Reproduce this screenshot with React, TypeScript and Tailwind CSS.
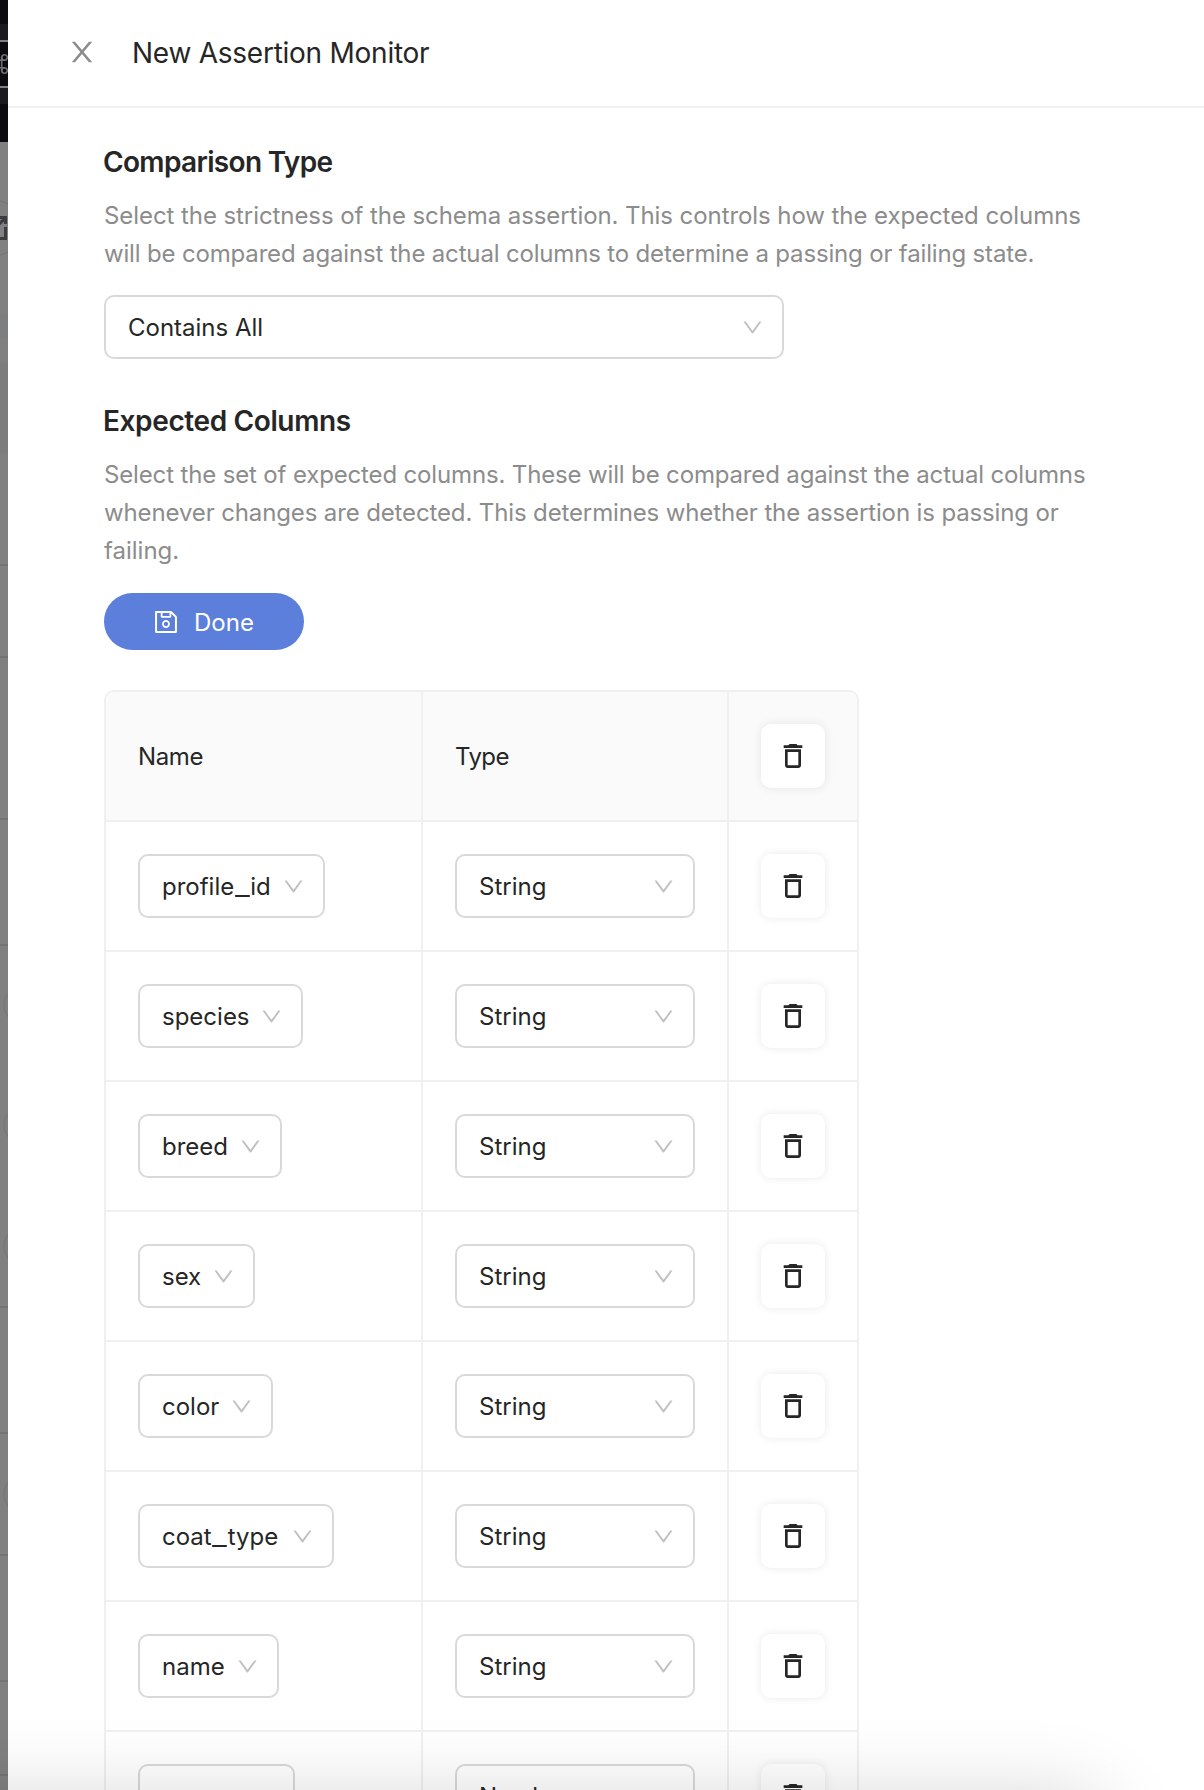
import { Fragment, type ReactNode } from "react";
import { AiOutlineSave } from "react-icons/ai";
import { MdDeleteOutline } from "react-icons/md";

type Column = { name: string; type: string; width: string };

const columns: Column[] = [
  { name: "profile_id", type: "String", width: "w-[187px]" },
  { name: "species", type: "String", width: "w-[165px]" },
  { name: "breed", type: "String", width: "w-[144px]" },
  { name: "sex", type: "String", width: "w-[117px]" },
  { name: "color", type: "String", width: "w-[135px]" },
  { name: "coat_type", type: "String", width: "w-[196px]" },
  { name: "name", type: "String", width: "w-[141px]" },
  { name: "", type: "Number", width: "w-[157px]" },
];

function ChevronDown() {
  return (
    <svg viewBox="64 64 896 896" className="size-[21px] shrink-0 mr-[1.5px] text-[#bfbfbf]" fill="currentColor">
      <path d="M884 256h-75c-5.1 0-9.9 2.5-12.9 6.6L512 654.2 227.9 262.6c-3-4.1-7.8-6.6-12.9-6.6h-75c-6.5 0-10.3 7.4-6.5 12.7l352.6 486.1c12.8 17.6 39 17.6 51.7 0l352.6-486.1c3.9-5.3.1-12.7-6.4-12.7z" />
    </svg>
  );
}

function CloseIcon() {
  return (
    <svg viewBox="0 0 1024 1024" className="size-8 text-[#8c8c8c]" fill="currentColor">
      <path d="M563.8 512l262.5-312.9c4.4-5.2.7-13.1-6.1-13.1h-79.8c-4.7 0-9.2 2.1-12.3 5.7L511.6 449.8 295.1 191.7c-3-3.6-7.5-5.7-12.3-5.7H203c-6.8 0-10.5 7.9-6.1 13.1L459.4 512 196.9 824.9A7.95 7.95 0 0 0 203 838h79.8c4.7 0 9.2-2.1 12.3-5.7l216.5-258.1 216.5 258.1c3 3.6 7.5 5.7 12.3 5.7h79.8c6.8 0 10.5-7.9 6.1-13.1L563.8 512z" />
    </svg>
  );
}

/* Renders a value with a slightly wider underscore. */
function Value({ text }: { text: string }) {
  return (
    <>
      {text.split("_").map((part, index) => (
        <Fragment key={index}>
          {index > 0 && <span className="mx-[2.5px] inline-block scale-x-[1.35]">_</span>}
          {part}
        </Fragment>
      ))}
    </>
  );
}

function Select({ value, width }: { value: string; width: string }) {
  return (
    <button
      className={`flex h-16 items-center justify-between rounded-[10px] border-2 border-[#d9d9d9] bg-white pl-[22px] pr-[18px] text-2xl text-[#262626] ${width}`}
    >
      <span className="translate-y-px whitespace-nowrap">
        <Value text={value} />
      </span>
      <ChevronDown />
    </button>
  );
}

function TrashButton() {
  return (
    <button className="flex size-16 items-center justify-center rounded-[10px] bg-white text-[#262626] shadow-[0_0_10px_rgba(0,0,0,0.09)]">
      <MdDeleteOutline className="size-8" />
    </button>
  );
}

function Row({ children, header = false }: { children: ReactNode; header?: boolean }) {
  return (
    <div
      className={`grid h-[130px] grid-cols-[317px_306px_128px] border-b-2 border-[#f0f0f0] text-2xl text-[#262626] ${header ? "bg-[#fafafa]" : ""}`}
    >
      {children}
    </div>
  );
}

function Cell({ children, last = false }: { children: ReactNode; last?: boolean }) {
  return (
    <div className={`flex items-center pl-8 ${last ? "" : "border-r-2 border-[#f0f0f0]"}`}>{children}</div>
  );
}

/* Sliver of the dimmed page that stays visible beside the drawer. */
function DimmedPage() {
  return (
    <svg width="8" height="1790" viewBox="0 0 8 1790" className="block shrink-0">
      <rect width="8" height="1790" fill="#808080" />
      <rect width="8" height="142" fill="#0c0b10" />
      <rect y="24" width="8" height="80" fill="#1a1b1f" />
      <rect y="40" width="8" height="48" fill="#808080" />
      <rect y="42" width="8" height="44" fill="#0c0b10" />
      <g fill="none" stroke="#6f6f72" strokeWidth="1.6">
        <circle cx="4.5" cy="57.500" r="2.800" />
        <circle cx="4.5" cy="70.500" r="2.800" />
        <path d="M0 60.300h5M0 67.700h5M1.700 57v14" />
      </g>
      <path d="M-20 201h10a28 27 0 0 1 18 3M-20 255h10a28 27 0 0 0 18-3" fill="none" stroke="#787878" strokeWidth="1.5" />
      <path d="M0 217.500H5.500V224M5.500 227V238.500H0M5.500 218L-3 226" fill="none" stroke="#3b3b40" strokeWidth="3" />
      <rect y="314" width="8" height="24" fill="#7c7e80" />
      <rect y="362" width="8" height="92" fill="#7c7c7d" />
      <g fill="#747474">
        <rect y="564" width="8" height="2" />
        <rect y="656" width="8" height="2" />
        <rect y="818" width="8" height="2" />
        <rect y="944" width="8" height="2" />
        <rect y="1306" width="8" height="2" />
        <rect y="1432" width="8" height="2" />
        <rect y="1554" width="8" height="2" />
        <rect y="1680" width="8" height="2" />
        <rect y="1774" width="8" height="2" />
      </g>
      <g fill="none" stroke="#787878" strokeWidth="1.500">
        <circle cx="22" cy="1005" r="18" />
        <circle cx="22" cy="1125" r="18" />
        <circle cx="22" cy="1246" r="18" />
        <circle cx="22" cy="1494" r="18" />
      </g>
    </svg>
  );
}

export default function App() {
  return (
    <div className="relative flex h-[1790px] w-[1204px] overflow-hidden bg-white font-['Inter',sans-serif] text-[#262626]">
      <DimmedPage />
      <main className="flex min-w-0 flex-1 flex-col">
        <header className="flex h-[108px] shrink-0 items-center border-b-2 border-[#f0f0f0] pl-[58px]">
          <button className="-mt-0.5">
            <CloseIcon />
          </button>
          <h1 className="ml-[34px] text-[28px] tracking-[-0.25px]">New Assertion Monitor</h1>
        </header>

        <div className="flex flex-col items-start pl-24 pt-8">
          <h2 className="-ml-px text-[28px] leading-[44px] font-semibold tracking-[-0.66px]">Comparison Type</h2>
          <p className="mt-[13px] text-2xl leading-[38px] whitespace-nowrap text-[#8c8c8c]">
            <span className="block tracking-[-0.075px]">
              Select the strictness of the schema assertion. This controls how the expected columns
            </span>
            <span className="block tracking-[-0.165px]">
              will be compared against the actual columns to determine a passing or failing state.
            </span>
          </p>
          <div className="mt-[22px]">
            <Select value="Contains All" width="w-[680px]" />
          </div>

          <h2 className="mt-10 -ml-px text-[28px] leading-[44px] font-semibold tracking-[-0.38px]">Expected Columns</h2>
          <p className="mt-[13px] text-2xl leading-[38px] whitespace-nowrap text-[#8c8c8c]">
            <span className="block tracking-[-0.15px]">
              Select the set of expected columns. These will be compared against the actual columns
            </span>
            <span className="block tracking-[-0.13px]">
              whenever changes are detected. This determines whether the assertion is passing or
            </span>
            <span className="block">failing.</span>
          </p>
          <button className="mt-[23px] flex h-[57px] w-[200px] items-center rounded-full bg-[#5c7fdb] pl-12 text-2xl text-white">
            <AiOutlineSave className="size-7" />
            <span className="ml-3.5 translate-y-px">Done</span>
          </button>

          <div className="mt-10 w-[755px] overflow-hidden rounded-t-[10px] border-2 border-b-0 border-[#f0f0f0]">
            <Row header>
              <Cell>
                <span className="translate-y-px tracking-[-0.4px]">Name</span>
              </Cell>
              <Cell>
                <span className="translate-y-px tracking-[-0.6px]">Type</span>
              </Cell>
              <Cell last>
                <TrashButton />
              </Cell>
            </Row>
            {columns.map((column, index) => (
              <Row key={index}>
                <Cell>
                  <Select value={column.name} width={column.width} />
                </Cell>
                <Cell>
                  <Select value={column.type} width="w-60" />
                </Cell>
                <Cell last>
                  <TrashButton />
                </Cell>
              </Row>
            ))}
          </div>
        </div>
      </main>

      <div className="pointer-events-none absolute top-[1797px] -left-24 h-32 w-[1202px] rounded-[40px] shadow-[0_0_80px_rgba(0,0,0,0.17)]" />
    </div>
  );
}
